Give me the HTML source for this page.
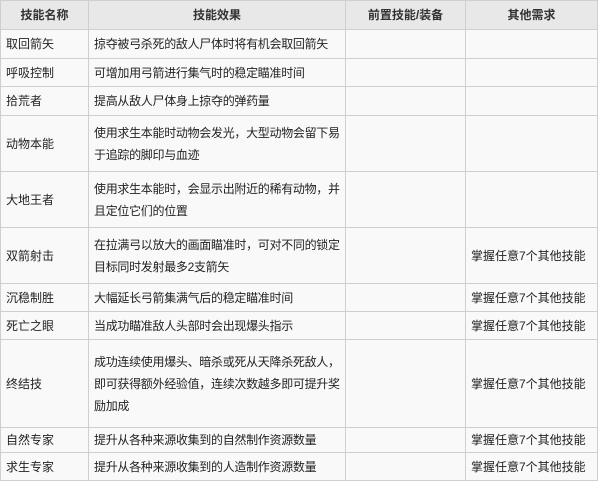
<html><head><style>
body{margin:0;background:#fff;}
table{position:absolute;left:0;top:0;border-collapse:collapse;table-layout:fixed;width:597px;font-family:"Liberation Sans","Noto Sans CJK SC",sans-serif;font-size:12px;color:#222;background:#f9f9f9}
td,th{border:1px solid #cfcfcf;padding:0 0 0 5px;line-height:22px;vertical-align:middle;text-align:left;overflow:hidden;white-space:nowrap}
td:nth-child(2){letter-spacing:-0.3px}
th{background:#e8e8e8;font-weight:bold;text-align:center;padding:0;color:#333}
</style></head><body>
<table>
<colgroup><col style="width:88px"><col style="width:257px"><col style="width:120px"><col style="width:132px"></colgroup>
<tr style="height:29px"><th>技能名称</th><th>技能效果</th><th>前置技能/装备</th><th>其他需求</th></tr>
<tr style="height:29px"><td>取回箭矢</td><td>掠夺被弓杀死的敌人尸体时将有机会取回箭矢</td><td></td><td></td></tr>
<tr style="height:28px"><td>呼吸控制</td><td>可增加用弓箭进行集气时的稳定瞄准时间</td><td></td><td></td></tr>
<tr style="height:29px"><td>拾荒者</td><td>提高从敌人尸体身上掠夺的弹药量</td><td></td><td></td></tr>
<tr style="height:56px"><td>动物本能</td><td>使用求生本能时动物会发光，大型动物会留下易<br>于追踪的脚印与血迹</td><td></td><td></td></tr>
<tr style="height:56px"><td>大地王者</td><td>使用求生本能时，会显示出附近的稀有动物，并<br>且定位它们的位置</td><td></td><td></td></tr>
<tr style="height:56px"><td>双箭射击</td><td>在拉满弓以放大的画面瞄准时，可对不同的锁定<br>目标同时发射最多2支箭矢</td><td></td><td>掌握任意7个其他技能</td></tr>
<tr style="height:28px"><td>沉稳制胜</td><td>大幅延长弓箭集满气后的稳定瞄准时间</td><td></td><td>掌握任意7个其他技能</td></tr>
<tr style="height:28px"><td>死亡之眼</td><td>当成功瞄准敌人头部时会出现爆头指示</td><td></td><td>掌握任意7个其他技能</td></tr>
<tr style="height:88px"><td>终结技</td><td>成功连续使用爆头、暗杀或死从天降杀死敌人，<br>即可获得额外经验值，连续次数越多即可提升奖<br>励加成</td><td></td><td>掌握任意7个其他技能</td></tr>
<tr style="height:25px"><td>自然专家</td><td>提升从各种来源收集到的自然制作资源数量</td><td></td><td>掌握任意7个其他技能</td></tr>
<tr style="height:28px"><td>求生专家</td><td>提升从各种来源收集到的人造制作资源数量</td><td></td><td>掌握任意7个其他技能</td></tr>
</table>
</body></html>
